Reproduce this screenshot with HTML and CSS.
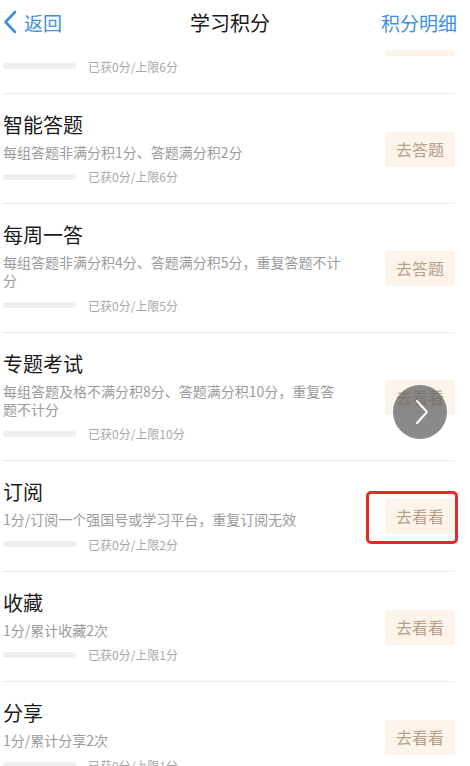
FILE: index.html
```html
<!DOCTYPE html>
<html lang="zh-CN">
<head>
    <meta charset="UTF-8">
    <meta name="viewport" content="width=device-width, initial-scale=1.0">
    <title>学习积分</title>
    <link rel="stylesheet" href="styles.css">
</head>
<body>
    <div class="page">
        <div class="header">
            <a class="back">
                <svg class="back-icon" viewBox="0 0 14 24" width="14" height="24">
                    <path d="M12 2 L2.5 12 L12 22" fill="none" stroke="#3d8fe3" stroke-width="2.6" stroke-linecap="round" stroke-linejoin="round"/>
                </svg>
                <span>返回</span>
            </a>
            <h1 class="title">学习积分</h1>
            <a class="detail">积分明细</a>
        </div>

        <div class="list">
            <div class="row first">
                <div class="info">
                    <div class="name">阅读文章</div>
                    <div class="desc">每有效阅读一篇文章积1分</div>
                    <div class="progress"><span class="bar"></span><span class="count">已获0分/上限6分</span></div>
                </div>
                <div class="btn">去看看</div>
            </div>

            <div class="row">
                <div class="info">
                    <div class="name">智能答题</div>
                    <div class="desc">每组答题非满分积1分、答题满分积2分</div>
                    <div class="progress"><span class="bar"></span><span class="count">已获0分/上限6分</span></div>
                </div>
                <div class="btn">去答题</div>
            </div>

            <div class="row">
                <div class="info">
                    <div class="name">每周一答</div>
                    <div class="desc">每组答题非满分积4分、答题满分积5分，重复答题不计分</div>
                    <div class="progress"><span class="bar"></span><span class="count">已获0分/上限5分</span></div>
                </div>
                <div class="btn">去答题</div>
            </div>

            <div class="row">
                <div class="info">
                    <div class="name">专题考试</div>
                    <div class="desc">每组答题及格不满分积8分、答题满分积10分，重复答题不计分</div>
                    <div class="progress"><span class="bar"></span><span class="count">已获0分/上限10分</span></div>
                </div>
                <div class="btn">去看看</div>
                <div class="next">
                    <svg viewBox="0 0 14 26" width="14" height="26">
                        <path d="M2 2 L12 13 L2 24" fill="none" stroke="#fff" stroke-width="2" stroke-linecap="round" stroke-linejoin="round"/>
                    </svg>
                </div>
            </div>

            <div class="row">
                <div class="info">
                    <div class="name">订阅</div>
                    <div class="desc">1分/订阅一个强国号或学习平台，重复订阅无效</div>
                    <div class="progress"><span class="bar"></span><span class="count">已获0分/上限2分</span></div>
                </div>
                <div class="btn marked">去看看</div>
            </div>

            <div class="row">
                <div class="info">
                    <div class="name">收藏</div>
                    <div class="desc">1分/累计收藏2次</div>
                    <div class="progress"><span class="bar"></span><span class="count">已获0分/上限1分</span></div>
                </div>
                <div class="btn">去看看</div>
            </div>

            <div class="row">
                <div class="info">
                    <div class="name">分享</div>
                    <div class="desc">1分/累计分享2次</div>
                    <div class="progress"><span class="bar"></span><span class="count">已获0分/上限1分</span></div>
                </div>
                <div class="btn">去看看</div>
            </div>
        </div>
    </div>
</body>
</html>
```

FILE: styles.css
```css
body {
    margin: 0;
    padding: 0;
    background: #fff;
    font-family: "Noto Sans CJK SC", "Noto Sans", sans-serif;
    color: #222;
}
.page {
    height: 766px;
    overflow: hidden;
    padding: 0 15px 0 3px;
}
.header {
    height: 50px;
    display: flex;
    align-items: center;
    justify-content: space-between;
    background: #fff;
}
.back {
    display: flex;
    align-items: center;
    gap: 7px;
    color: #3d8fe3;
    font-size: 19px;
    width: 90px;
    margin-top: -6px;
}
.back-icon {
    display: block;
}
.title {
    margin: -6px 0 0;
    font-size: 20px;
    font-weight: normal;
    color: #1a1a1a;
}
.detail {
    color: #3d8fe3;
    font-size: 19px;
    width: 90px;
    text-align: right;
    margin: -6px -2px 0 0;
}
/* scrolled list, clipped under the header; a little room on the right for the marker */
.list {
    height: 716px;
    overflow: hidden;
    margin-right: -4px;
    padding-right: 4px;
}
.row {
    display: flex;
    align-items: center;
    gap: 40px;
    padding: 18px 0 18.5px;
    border-bottom: 1px solid #ececec;
    position: relative;
}
.row.first {
    margin-top: -67px;
}
.info {
    flex: 1;
    min-width: 0;
}
.name {
    font-size: 20px;
    line-height: 26px;
    color: #1a1a1a;
}
.desc {
    margin-top: 5px;
    font-size: 14px;
    line-height: 18px;
    color: #9b9b9b;
}
.progress {
    display: flex;
    align-items: center;
    gap: 12px;
    margin-top: 8px;
    height: 16px;
}
.bar {
    width: 73px;
    height: 6px;
    border-radius: 3px;
    background: #efefef;
}
.count {
    font-size: 12px;
    color: #a8a8a8;
}
.btn {
    width: 70px;
    height: 35px;
    line-height: 35px;
    text-align: center;
    background: #fcf3ea;
    color: #b7a08a;
    font-size: 16px;
    margin-top: 2px;
    position: relative;
}
/* red outline drawn around the subscribe button */
.btn.marked::after {
    content: "";
    position: absolute;
    top: -8px;
    bottom: -10px;
    left: -19px;
    right: -3px;
    border: 3px solid #e52a2a;
    border-radius: 5px;
}
.next {
    position: absolute;
    right: 8px;
    top: 52px;
    width: 54px;
    height: 54px;
    border-radius: 50%;
    background: rgba(105, 105, 105, 0.78);
    display: flex;
    align-items: center;
    justify-content: center;
}
.next svg {
    margin-left: 3px;
}
```
